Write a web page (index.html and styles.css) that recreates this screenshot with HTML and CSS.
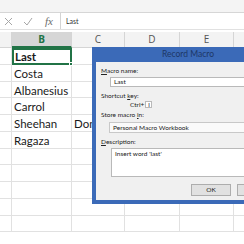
FILE: index.html
```html
<!DOCTYPE html>
<html>
<head>
<meta charset="utf-8">
<link rel="stylesheet" href="styles.css">
</head>
<body>
<div class="app">
  <div class="ribbon-edge"></div>
  <div class="formula-bar">
    <div class="fb-icons">
      <svg class="ic" width="9" height="9" viewBox="0 0 9 9"><path d="M1 1L8 8M8 1L1 8" stroke="#a6a6a6" stroke-width="1" fill="none"/></svg>
      <svg class="ic" width="10" height="9" viewBox="0 0 10 9"><path d="M1 5L4 8L9 1" stroke="#a6a6a6" stroke-width="1" fill="none"/></svg>
      <span class="fx">fx</span>
    </div>
    <div class="fb-input">Last</div>
  </div>
  <div class="sheet">
    <div class="hdr corner"></div>
    <div class="hdr sel">B</div>
    <div class="hdr">C</div>
    <div class="hdr">D</div>
    <div class="hdr">E</div>
    <div class="hdr"></div>

    <div class="c"></div><div class="c active">Last<span class="handle"></span></div><div class="c"></div><div class="c"></div><div class="c"></div><div class="c"></div>
    <div class="c"></div><div class="c">Costa</div><div class="c"></div><div class="c"></div><div class="c"></div><div class="c"></div>
    <div class="c"></div><div class="c">Albanesius</div><div class="c"></div><div class="c"></div><div class="c"></div><div class="c"></div>
    <div class="c"></div><div class="c">Carrol</div><div class="c"></div><div class="c"></div><div class="c"></div><div class="c"></div>
    <div class="c"></div><div class="c">Sheehan</div><div class="c">Donnelly</div><div class="c"></div><div class="c"></div><div class="c"></div>
    <div class="c"></div><div class="c">Ragaza</div><div class="c"></div><div class="c"></div><div class="c"></div><div class="c"></div>
    <div class="c"></div><div class="c"></div><div class="c"></div><div class="c"></div><div class="c"></div><div class="c"></div>
    <div class="c"></div><div class="c"></div><div class="c"></div><div class="c"></div><div class="c"></div><div class="c"></div>
    <div class="c"></div><div class="c"></div><div class="c"></div><div class="c"></div><div class="c"></div><div class="c"></div>
    <div class="c"></div><div class="c"></div><div class="c"></div><div class="c"></div><div class="c"></div><div class="c"></div>
    <div class="c"></div><div class="c"></div><div class="c"></div><div class="c"></div><div class="c"></div><div class="c"></div>
  </div>

  <div class="dialog">
    <div class="dlg-title">Record Macro</div>
    <div class="dlg-body">
      <div class="lbl l-name"><u>M</u>acro name:</div>
      <div class="field name">Last</div>
      <div class="lbl l-key">Shortcut <u>k</u>ey:</div>
      <div class="ctrl-row"><span>Ctrl+</span><span class="key">l</span></div>
      <div class="lbl l-store">Store macro <u>i</u>n:</div>
      <div class="field select">Personal Macro Workbook</div>
      <div class="lbl l-desc"><u>D</u>escription:</div>
      <div class="field desc">Insert word 'last'</div>
      <div class="btn-row">
        <div class="btn">OK</div>
        <div class="btn">Cancel</div>
      </div>
    </div>
  </div>
</div>
</body>
</html>
```
FILE: styles.css
```css
* { box-sizing: border-box; }
html, body { margin: 0; padding: 0; }
body { width: 244px; height: 244px; overflow: hidden; background: #fff; }
.app { position: relative; width: 244px; height: 244px; overflow: hidden; font-family: "Lato", "Liberation Sans", sans-serif; }

.ribbon-edge { height: 13px; background: #f4f4f4; border-bottom: 1px solid #d6d6d6; }

.formula-bar { display: flex; height: 17px; background: #fff; border-bottom: 1px solid #e1e1e1; }
.fb-icons { width: 60px; display: flex; align-items: center; padding-left: 4px; gap: 10px; }
.fx { font-family: "Liberation Serif", serif; font-style: italic; font-size: 11px; color: #6b6b6b; margin-left: 2px; }
.fb-input { flex: 1; border-left: 1px solid #d4d4d4; font-family: "Lato", sans-serif; font-size: 7px; line-height: 16px; padding-left: 5px; color: #333; }

.sheet {
  margin-top: 2px;
  display: grid;
  grid-template-columns: 12px 60px 53px 55px 54px 40px;
  grid-template-rows: 16px repeat(11, 16.75px);
}
.hdr { background: #f3f3f3; border-right: 1px solid #d5d5d5; border-bottom: 1px solid #d5d5d5; font-family: "Open Sans", sans-serif; font-size: 10px; color: #555; text-align: center; line-height: 15px; }
.hdr.sel { background: #d6d6d6; color: #217346; font-weight: bold; border-bottom: 2px solid #217346; }
.c { border-right: 1px solid #e1e1e1; border-bottom: 1px solid #e1e1e1; font-size: 11.5px; color: #1a1a1a; padding-left: 2px; line-height: 17px; white-space: nowrap; overflow: visible; }
.c.active { position: relative; border: 2px solid #217346; font-weight: bold; padding-left: 1px; line-height: 14px; }
.handle { position: absolute; right: -3px; bottom: -3px; width: 4px; height: 4px; background: #217346; border: 1px solid #fff; }

.dialog {
  position: absolute; left: 92px; top: 47px; width: 192px;
  background: #f0f0f0; border: 4px solid #3b6ab8; border-top: 0;
  font-family: "Lato", sans-serif; font-size: 6.5px; color: #222;
}
.dlg-title { height: 15px; margin: 0 -4px; background: #3b6ab8; color: #1d3766; text-align: center; font-size: 8.5px; line-height: 15px; }
.dlg-body { padding: 5px 0 4px 5px; display: flex; flex-direction: column; }
.lbl { height: 8px; line-height: 8px; }
.l-key { margin-top: 5px; }
.l-store { margin-top: 3px; }
.l-desc { margin-top: 5px; }
.field { background: #fff; border: 1px solid #b9b9b9; padding-left: 3px; }
.name { height: 10px; line-height: 8px; margin-top: 2px; margin-left: 9px; }
.ctrl-row { display: flex; align-items: center; gap: 1px; margin: 1px 0 0 29px; height: 7px; }
.key { display: inline-block; width: 7px; height: 7px; background: #fff; border: 1px solid #b9b9b9; line-height: 5px; padding-left: 2px; }
.select { height: 11px; line-height: 9px; margin-top: 3px; margin-left: 8px; border-color: #c8c8c8; background: #fafafa; }
.desc { height: 29px; margin-top: 2px; margin-left: 10px; line-height: 9px; padding-left: 3px; }
.btn-row { display: flex; gap: 6px; margin-top: 7px; margin-left: 90px; }
.btn { width: 40px; height: 12px; background: #e1e1e1; border: 1px solid #adadad; text-align: center; line-height: 10px; flex-shrink: 0; }
```
